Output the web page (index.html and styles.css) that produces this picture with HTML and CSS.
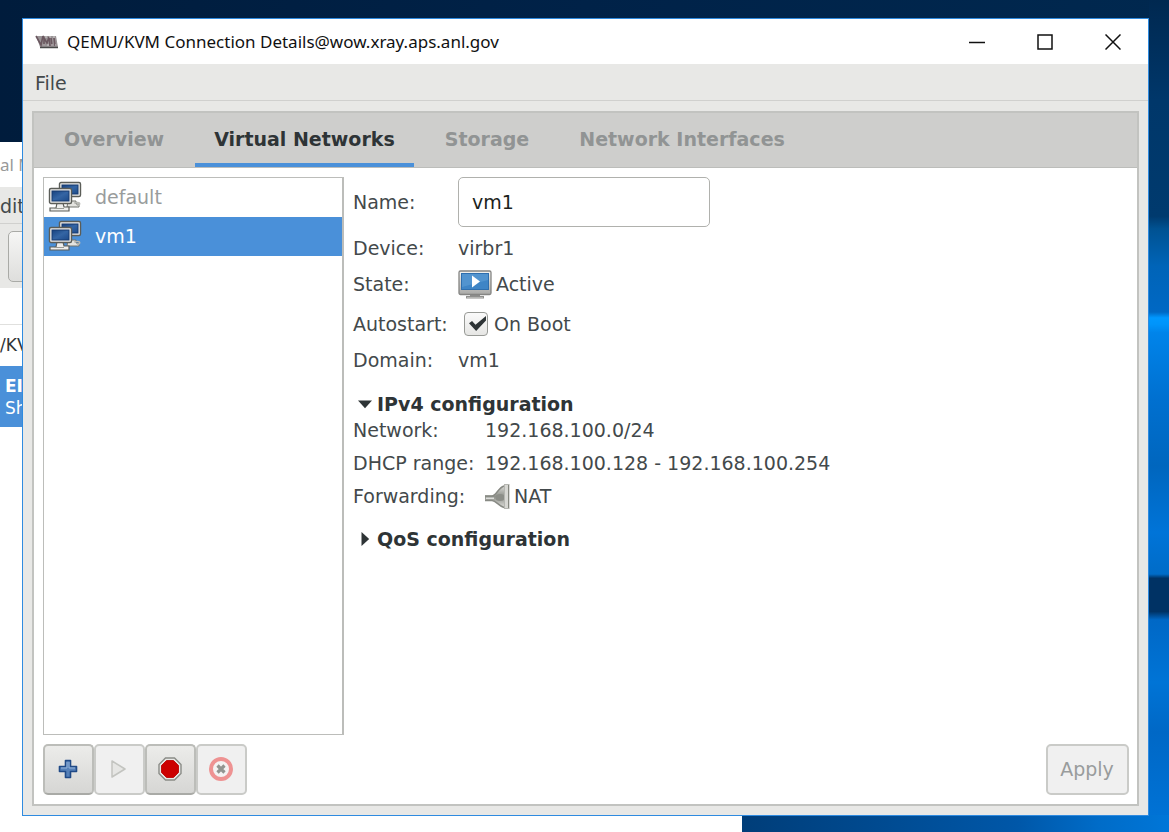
FILE: index.html
```html
<!DOCTYPE html>
<html lang="en">
<head>
<meta charset="utf-8">
<title>QEMU/KVM Connection Details</title>
<link rel="stylesheet" href="styles.css">
</head>
<body>
<svg class="defs" aria-hidden="true">
  <defs>
    <linearGradient id="screen-blue" x1="0" y1="0" x2="1" y2="1">
      <stop offset="0" stop-color="#17427f"/><stop offset="0.5" stop-color="#3465a4"/><stop offset="1" stop-color="#1c4a8a"/>
    </linearGradient>
    <linearGradient id="bezel" x1="0" y1="0" x2="0" y2="1">
      <stop offset="0" stop-color="#f4f4f2"/><stop offset="1" stop-color="#a8a8a6"/>
    </linearGradient>
    <linearGradient id="plug" x1="0" y1="0" x2="0" y2="1">
      <stop offset="0" stop-color="#dcdcd8"/><stop offset="0.5" stop-color="#8f918b"/><stop offset="1" stop-color="#dcdcd8"/>
    </linearGradient>
    <symbol id="computers" viewBox="0 0 34 32">
      <path d="M20 20h8v3h3v3H19z" fill="#e4e4e0" stroke="#73756f"/>
      <path d="M26 22c7-2 7 2 3 3" fill="none" stroke="#b9bab5" stroke-width="1.5"/>
      <rect x="11.500" y="1.500" width="21" height="14" rx="1.500" fill="#eeeeec" stroke="#5b5d58" stroke-width="1.400"/>
      <rect x="14" y="4" width="16" height="9" fill="url(#screen-blue)" stroke="#173b70"/>
      <path d="M9 22h6l1 4h5v4H2v-3h6z" fill="#eeeeec" stroke="#5b5d58" stroke-width="1.200"/>
      <rect x="1.500" y="7.500" width="22" height="15" rx="1.500" fill="#eeeeec" stroke="#5b5d58" stroke-width="1.400"/>
      <rect x="4" y="10" width="17" height="10" fill="url(#screen-blue)" stroke="#173b70"/>
      <path d="M6 27.500h10" stroke="#999b95"/>
    </symbol>
  </defs>
</svg>
<div class="desktop">
  <section class="back-window" aria-label="Background window">
    <div class="back-title">al M</div>
    <div class="back-menu">dit</div>
    <div class="back-tools"><button class="back-button" type="button" aria-label="New"></button></div>
    <div class="back-head"></div>
    <div class="back-conn">/KV</div>
    <div class="back-vm"><strong>EI</strong><span>Sh</span></div>
  </section>

  <main class="window">
    <header class="titlebar">
      <svg class="app-icon" viewBox="0 0 24 14" aria-hidden="true">
        <path d="M1 1h20l2 11H5z" fill="#9a9496"/>
        <path d="M1 1l5 9 2-9M9 11V3l3 5 2-6 1 9M16 3l1 8M19 3l1 8" fill="none" stroke="#6b5860" stroke-width="1.600"/>
        <path d="M10 2h11M8 10h13" stroke="#d0cccd" stroke-width="1" stroke-dasharray="2 2"/>
        <path d="M5 12.500h18" stroke="#484848" stroke-width="1.500"/>
      </svg>
      <h1 class="title">QEMU/KVM Connection Details@wow.xray.aps.anl.gov</h1>
      <div class="controls">
        <button type="button" aria-label="Minimize"><svg viewBox="0 0 16 16"><path d="M0 8.500h16" /></svg></button>
        <button type="button" aria-label="Maximize"><svg viewBox="0 0 16 16"><path d="M1 1h14v14H1z"/></svg></button>
        <button type="button" aria-label="Close"><svg viewBox="0 0 16 16"><path d="M.5.5l15 15M15.500.5l-15 15"/></svg></button>
      </div>
    </header>
    <nav class="menubar"><button type="button">File</button></nav>

    <div class="body">
      <div class="notebook">
        <div class="tabs" role="tablist">
          <button class="tab" type="button" role="tab">Overview</button>
          <button class="tab active" type="button" role="tab" aria-selected="true">Virtual Networks</button>
          <button class="tab" type="button" role="tab">Storage</button>
          <button class="tab" type="button" role="tab">Network Interfaces</button>
        </div>
        <div class="page">
          <div class="split">
            <ul class="list">
              <li class="row inactive"><svg class="net-icon" aria-hidden="true"><use href="#computers"/></svg>default</li>
              <li class="row selected"><svg class="net-icon" aria-hidden="true"><use href="#computers"/></svg>vm1</li>
            </ul>
            <form class="details">
              <div class="fields">
                <label for="name">Name:</label>
                <input class="name" id="name" type="text" value="vm1">
                <span>Device:</span><span>virbr1</span>
                <span>State:</span>
                <span class="state">
                  <svg class="state-icon" viewBox="0 0 34 30" aria-hidden="true">
                    <path d="M12 25h10v2h4v2.500H8V27h4z" fill="#8e8e8c"/>
                    <path d="M9 28.500h16" stroke="#b5b5b3"/>
                    <rect x="1" y="2" width="32" height="23.500" rx="1.500" fill="url(#bezel)" stroke="#858583" stroke-width="1.300"/>
                    <rect x="3.500" y="4.500" width="27" height="16" fill="#3f85c6" stroke="#2f6fae"/>
                    <path d="M4 5h26v6L4 18z" fill="#5294cf"/>
                    <path d="M14 6.500l8 6-8 6z" fill="#fff"/>
                  </svg>Active
                </span>
                <span>Autostart:</span>
                <label class="boot"><input class="check" type="checkbox" checked>On Boot</label>
                <span>Domain:</span><span>vm1</span>
              </div>
              <details class="group" open>
                <summary>IPv4 configuration</summary>
                <div class="fields ipv4">
                  <span>Network:</span><span>192.168.100.0/24</span>
                  <span>DHCP range:</span><span>192.168.100.128 - 192.168.100.254</span>
                  <span>Forwarding:</span>
                  <span class="state">
                    <svg class="nat-icon" viewBox="0 0 25 25" aria-hidden="true">
                      <path d="M0 11.500h7c4 0 6-8 12-10v22c-6-2-8-7-12-7H0z" fill="url(#plug)"/>
                      <path d="M0 12h7c4 0 6-8 12-10M0 16.500h7c4 0 6 5 12 7" fill="none" stroke="#888a84" stroke-width="1.500"/>
                      <path d="M1 14.200h8" stroke="#eeeeec" stroke-width="1.200"/>
                      <ellipse cx="15" cy="13.500" rx="4.500" ry="3.500" fill="#8c8e88"/>
                      <rect x="19.500" y=".5" width="4.500" height="24" fill="#d8d8d4" stroke="#b5b6b1"/>
                      <path d="M23.500 1v23" stroke="#85877f"/>
                    </svg>NAT
                  </span>
                </div>
              </details>
              <details class="group">
                <summary>QoS configuration</summary>
              </details>
            </form>
          </div>
          <footer class="actions">
            <div class="tools">
              <button class="btn" type="button" aria-label="Add network">
                <svg viewBox="0 0 26 26"><path d="M10.500 4.500h5v6h6v5h-6v6h-5v-6h-6v-5h6z" fill="#5580b8" stroke="#204a87" stroke-width="1.600" stroke-linejoin="round"/><path d="M12 6v6H6M14 6v6h6" fill="none" stroke="#93b2d9"/></svg>
              </button>
              <button class="btn" type="button" aria-label="Start network" disabled>
                <svg viewBox="0 0 26 26"><path d="M6 5l13 8-13 8z" fill="#e6e6e4" stroke="#c3c4c0" stroke-width="1.500" stroke-linejoin="round"/></svg>
              </button>
              <button class="btn" type="button" aria-label="Stop network">
                <svg viewBox="0 0 26 26"><path d="M8.500 2h9l6.500 6.500v9L17.500 24h-9L2 17.500v-9z" fill="#e8e8e6" stroke="#8a8c87" stroke-width="1.400"/><path d="M9.500 4.500h7l5 5v7l-5 5h-7l-5-5v-7z" fill="#cc0000" stroke="#c01010"/></svg>
              </button>
              <button class="btn" type="button" aria-label="Delete network" disabled>
                <svg viewBox="0 0 26 26"><circle cx="13" cy="13" r="10" fill="#f4f2f2" stroke="#ee9292" stroke-width="4"/><path d="M9.500 9.500l7 7M16.500 9.500l-7 7" stroke="#929490" stroke-width="3.200"/></svg>
              </button>
            </div>
            <button class="btn apply" type="button" disabled>Apply</button>
          </footer>
        </div>
      </div>
    </div>
  </main>
</div>
</body>
</html>
```
FILE: styles.css
```css
* { box-sizing: border-box; }
body {
  margin: 0;
  font: 19px/22px "DejaVu Sans", sans-serif;
  color: #43494b;
}
button, input { font: inherit; color: inherit; margin: 0; }
.defs { position: absolute; width: 0; height: 0; }

.desktop {
  position: relative;
  height: 100vh;
  overflow: hidden;
  background:
    linear-gradient(90deg, transparent 60%, #003d78 63%, #0057a8 87%, #006cc8 94%, #0076d8) bottom / 100% 17px no-repeat,
    linear-gradient(180deg, #002850 0, #00376a 12%, #003a6e 26%, #005292 27.500%, #0064b8 32%, #0068c4 37.500%, #0098ff 38.200%, #0094fa 39%, #0084ea 40%, #0070d0 48%, #0066be 56%, #0074d8 64%, #006cc8 69%, #003264 69.500%, #003264 73.500%, #0068c6 74.500%, #0074d6 82%, #0068c6 88%, #0074d8) right / 20px 100% no-repeat,
    linear-gradient(90deg, #001c3c, #002248 50%, #00284f);
}

/* Window behind the dialog */
.back-window {
  position: absolute;
  top: 142px;
  bottom: 0;
  left: 0;
  width: 742px;
  background: #fff;
}
.back-title {
  height: 45px;
  line-height: 45px;
  font-family: "Noto Sans", sans-serif;
  font-size: 17px;
  color: #999;
}
.back-menu {
  height: 37px;
  line-height: 38px;
  background: #e8e8e6;
  border-bottom: 1px solid #d0d0ce;
}
.back-tools { height: 64px; padding: 7px 8px; background: #e8e8e6; }
.back-button {
  display: block;
  width: 51px;
  height: 51px;
  border: 1px solid #a9aaa6;
  border-radius: 5px;
  background: linear-gradient(#f6f6f5, #dededc);
}
.back-head { height: 37px; border-bottom: 1px solid #e0e0de; }
.back-conn { height: 41px; line-height: 41px; font-size: 17px; color: #2e3436; }
.back-vm {
  display: flex;
  flex-direction: column;
  justify-content: center;
  height: 61px;
  padding-left: 5px;
  background: #4a90d9;
  color: #fff;
  font-size: 17px;
}

/* Dialog window */
.window {
  position: absolute;
  inset: 18px 20px 16px 22px;
  display: flex;
  flex-direction: column;
  border: 1px solid #2f8be0;
  background: #e8e8e6;
}
.titlebar {
  display: flex;
  align-items: center;
  height: 45px;
  padding-left: 12px;
  background: #fff;
  color: #111;
}
.app-icon { width: 24px; height: 14px; }
.title {
  flex: 1;
  margin: 0 0 0 8px;
  font: 400 17px/24px "Noto Sans", sans-serif;
  white-space: nowrap;
}
.controls { display: flex; padding-right: 1px; }
.controls button {
  display: grid;
  place-items: center;
  width: 68px;
  height: 42px;
  padding: 0;
  border: 0;
  background: none;
}
.controls svg { width: 16px; height: 16px; fill: none; stroke: #111; stroke-width: 1.500; }
.menubar { height: 37px; padding: 0 12px; border-bottom: 1px solid #d0d0ce; }
.menubar button { height: 36px; padding: 2px 0 0; border: 0; background: none; }
.body { flex: 1; display: flex; padding: 10px 9px 9px; min-height: 0; }

.notebook {
  flex: 1;
  display: flex;
  flex-direction: column;
  border: 2px solid #c2c3c0;
  background: #fff;
}
.tabs {
  display: flex;
  gap: 12px;
  height: 55px;
  padding-left: 11px;
  background: #cececc;
  border-bottom: 1px solid #bcbdba;
}
.tab {
  height: 54px;
  padding: 2px 19px 0;
  border: 0;
  border-bottom: 4px solid transparent;
  background: none;
  font-weight: 700;
  color: #919494;
  white-space: nowrap;
}
.tab.active { color: #2e3436; border-bottom-color: #4a90d9; }

.page { flex: 1; display: flex; flex-direction: column; gap: 9px; padding: 9px 8px 9px 9px; min-height: 0; }
.split { flex: 1; display: flex; gap: 9px; min-height: 0; }
.list {
  width: 301px;
  margin: 0;
  padding: 0;
  list-style: none;
  border: 1px solid #bcbdba;
  border-right-width: 2px;
}
.row { display: flex; align-items: center; gap: 13px; height: 39px; padding: 0 0 2px 4px; }
.row.inactive { color: #999c9c; }
.row.selected { background: #4a90d9; color: #fff; }
.net-icon { width: 34px; height: 32px; }

.details { flex: 1; }
.fields {
  display: grid;
  grid-template-columns: 105px 1fr;
  grid-template-rows: 50px 22px 30px 30px 22px;
  gap: 10px 0;
  align-items: center;
  white-space: nowrap;
}
.name {
  width: 252px;
  height: 50px;
  padding: 0 13px;
  border: 1px solid #b0b1ad;
  border-radius: 5px;
  background: #fff;
  color: #1c1f20;
}
.state { display: flex; align-items: center; gap: 4px; }
.state-icon { width: 34px; height: 30px; }
.boot { display: flex; align-items: center; gap: 6px; padding-left: 6px; }
.check {
  appearance: none;
  position: relative;
  width: 24px;
  height: 24px;
  border: 1px solid #989a96;
  border-radius: 4px;
  background: linear-gradient(#fafafa, #e6e6e4);
}
.check:checked::after {
  content: "";
  position: absolute;
  inset: 3px 1px 4px 4px;
  background: #2e3436;
  clip-path: polygon(0 48%, 18% 34%, 38% 58%, 100% 0, 100% 30%, 42% 100%);
}
.group { margin-top: 22px; }
.group + .group { margin-top: 21px; }
.group summary {
  display: flex;
  align-items: center;
  gap: 5px;
  padding-left: 5px;
  list-style: none;
  font-weight: 700;
  color: #2e3436;
}
.group summary::before {
  content: "";
  width: 14px;
  height: 14px;
  background: #2e3436;
  clip-path: polygon(25% 0, 80% 50%, 25% 100%);
}
.group[open] summary::before { clip-path: polygon(0 25%, 100% 25%, 50% 80%); }
.ipv4 {
  grid-template-columns: 132px 1fr;
  grid-template-rows: 22px 22px 22px;
  gap: 11px 0;
  margin-top: 4px;
}
.nat-icon { width: 25px; height: 25px; }

.actions { display: flex; justify-content: space-between; }
.tools { display: flex; }
.btn {
  display: grid;
  place-items: center;
  width: 51px;
  height: 51px;
  padding: 0 1px 1px 0;
  border: 2px solid #bcbdb9;
  border-bottom-color: #a9aaa6;
  border-radius: 5px;
  background: linear-gradient(#ececea, #d6d6d4);
}
.btn:disabled { border-color: #cacbc8; background: #f0f0f0; color: #999c9c; }
.btn svg { width: 26px; height: 26px; }
.btn.apply { width: 83px; }
```
